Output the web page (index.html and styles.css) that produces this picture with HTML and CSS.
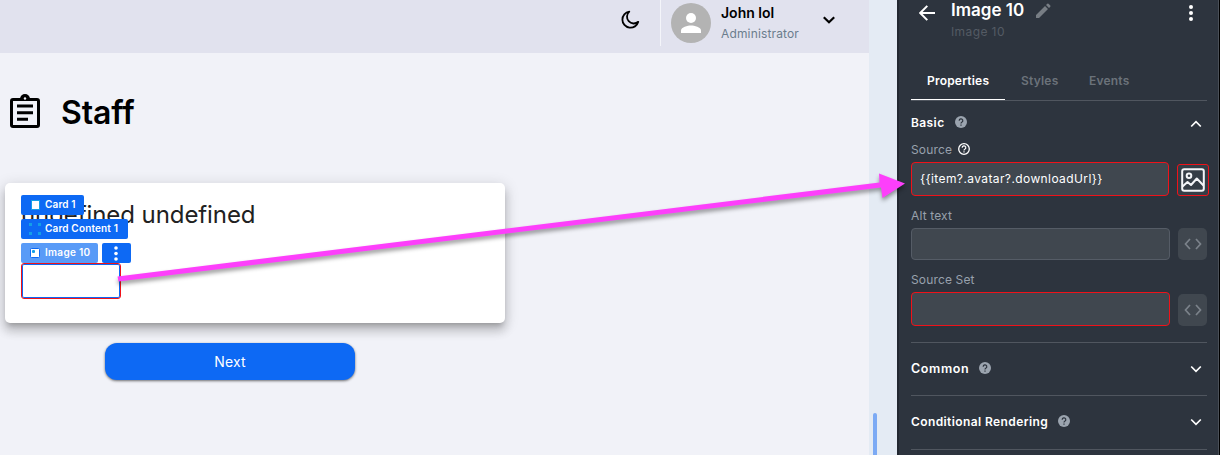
FILE: index.html
```html
<!DOCTYPE html>
<html lang="en">
<head>
<meta charset="utf-8">
<title>Staff</title>
<link rel="stylesheet" href="styles.css">
</head>
<body>
<div class="app">
  <main class="canvas">
    <header class="topbar">
      <svg class="moon" width="20" height="20" viewBox="0 0 20 20"><path d="M9.300 1.600A8.100 8.100 0 1 0 18.300 11.800A6.600 6.600 0 0 1 9.300 1.600Z" fill="none" stroke="#000" stroke-width="1.800" stroke-linejoin="round"/></svg>
      <div class="user">
        <svg width="40" height="40" viewBox="0 0 40 40"><circle cx="20" cy="20" r="20" fill="#b3b3b3"/><circle cx="20" cy="15" r="5" fill="#fff"/><path d="M10 30v-2.500c0-3.300 6.700-5 10-5s10 1.700 10 5V30Z" fill="#fff"/></svg>
        <div class="who"><span class="name">John lol</span><span class="role">Administrator</span></div>
        <svg class="caret" width="14" height="8" viewBox="0 0 14 8"><path d="M1.800 1.300 7 6.300l5.200-5" fill="none" stroke="#000" stroke-width="2.200"/></svg>
      </div>
    </header>
    <div class="title">
      <svg width="32" height="35" viewBox="0 0 32 35"><rect x="2.500" y="5.500" width="27" height="27" rx="1.500" fill="none" stroke="#000" stroke-width="3"/><path d="M11 5a5 5 0 0 1 10 0Z" fill="#000"/><circle cx="16" cy="4.500" r="1.200" fill="#f0f1f7"/><path d="M8 12h16M8 18.700h16M8 25.300h11" stroke="#000" stroke-width="3"/></svg>
      <h1>Staff</h1>
    </div>
    <section class="card">
      <p class="card-text">undefined undefined</p>
      <div class="chips">
        <span class="chip c1"><svg width="12" height="12" viewBox="0 0 12 12"><rect x="2.500" y="1.500" width="8" height="9" fill="#fff" stroke="#149fe8"/></svg><b>Card 1</b></span>
        <span class="chip c2"><svg width="12" height="12" viewBox="0 0 12 12"><path d="M0 0h3v3H0zM9 0h3v3H9zM0 9h3v3H0zM9 9h3v3H9z" fill="#149fe8"/></svg><b>Card Content 1</b></span>
        <div class="chip-row">
          <span class="chip c3"><svg width="12" height="12" viewBox="0 0 12 12"><rect x="1.500" y="1.500" width="9" height="9" rx="1" fill="#fff" stroke="#0d69f4"/><rect x="3" y="3" width="3" height="3" rx="1" fill="#149fe8"/></svg><b>Image 10</b></span>
          <span class="chip more"><svg width="4" height="15" viewBox="0 0 4 15"><g fill="#fff"><circle cx="2" cy="2" r="1.800"/><circle cx="2" cy="7.500" r="1.800"/><circle cx="2" cy="13" r="1.800"/></g></svg></span>
        </div>
        <div class="image-slot"></div>
      </div>
    </section>
    <button class="next">Next</button>
  </main>
  <div class="gutter"><div class="thumb"></div></div>
  <aside class="panel">
    <div class="head">
      <svg class="back" width="16" height="16" viewBox="0 0 16 16"><path d="M16 8H1.500M8.300.900 1.200 8l7.100 7.100" fill="none" stroke="#fff" stroke-width="2"/></svg>
      <div class="names">
        <div class="main-name"><span class="component">Image 10</span><svg width="16" height="16" viewBox="0 0 16 16"><path d="M1 15v-3L10 3l3 3-9 9ZM11 2l1.300-1.300a1 1 0 0 1 1.200 0l1.800 1.800a1 1 0 0 1 0 1.200L14 5Z" fill="#777d84"/></svg></div>
        <span class="sub-name">Image 10</span>
      </div>
      <svg class="kebab" width="4" height="16" viewBox="0 0 4 16"><g fill="#fff"><circle cx="2" cy="2" r="2"/><circle cx="2" cy="8" r="2"/><circle cx="2" cy="14" r="2"/></g></svg>
    </div>
    <nav class="tabs"><span class="tab active"><b>Properties</b></span><span class="tab styles"><b>Styles</b></span><span class="tab events"><b>Events</b></span></nav>
    <div class="section basic"><span class="t-basic">Basic</span>
      <svg class="help" width="12" height="12" viewBox="0 0 12 12"><circle cx="6" cy="6" r="6" fill="#9ba4af"/><path d="M4.200 4.700a1.800 1.800 0 1 1 2.600 1.500Q6 6.600 6 7.500M6 8.600v1.200" fill="none" stroke="#2d343e" stroke-width="1.200"/></svg>
      <svg class="chev" width="12" height="8" viewBox="0 0 12 8"><path d="m1.200 6.500 4.800-4.800 4.800 4.800" fill="none" stroke="#fff" stroke-width="1.700"/></svg>
    </div>
    <div class="label l1"><span class="t-source">Source</span><svg width="12" height="12" viewBox="0 0 12 12"><circle cx="6" cy="6" r="5.300" fill="none" stroke="#fff" stroke-width="1.300"/><path d="M4.200 4.700a1.800 1.800 0 1 1 2.600 1.500Q6 6.600 6 7.500M6 8.300v1.200" fill="none" stroke="#fff" stroke-width="1.200"/></svg></div>
    <div class="field f1"><div class="input red"><span>{{item?.avatar?.downloadUrl}}</span></div>
      <div class="pic"><svg width="24" height="24" viewBox="0 0 24 24"><g fill="none" stroke="#f3f5f8" stroke-width="2"><rect x="1.200" y="1.200" width="21.600" height="21.600" rx="2"/><circle cx="8" cy="7.800" r="2.300"/><path d="m1.500 18.500 5-4.500 3.500 3 5.800-6.500 6.700 7" stroke-linejoin="round"/></g></svg></div>
    </div>
    <div class="label l2"><span class="t-alt">Alt text</span></div>
    <div class="field f2"><div class="input"></div><div class="code"><svg width="18" height="12" viewBox="0 0 18 12"><path d="M6 1 1.500 6 6 11M12 1l4.500 5-4.500 5" fill="none" stroke="#7b828a" stroke-width="1.700"/></svg></div></div>
    <div class="label l3"><span class="t-set">Source Set</span></div>
    <div class="field f3"><div class="input red"></div><div class="code"><svg width="18" height="12" viewBox="0 0 18 12"><path d="M6 1 1.500 6 6 11M12 1l4.500 5-4.500 5" fill="none" stroke="#7b828a" stroke-width="1.700"/></svg></div></div>
    <div class="section common"><span class="t-common">Common</span>
      <svg class="help" width="12" height="12" viewBox="0 0 12 12"><circle cx="6" cy="6" r="6" fill="#9ba4af"/><path d="M4.200 4.700a1.800 1.800 0 1 1 2.600 1.500Q6 6.600 6 7.500M6 8.600v1.200" fill="none" stroke="#2d343e" stroke-width="1.200"/></svg>
      <svg class="chev" width="12" height="8" viewBox="0 0 12 8"><path d="m1.200 1.500 4.800 4.800 4.800-4.800" fill="none" stroke="#fff" stroke-width="1.700"/></svg></div>
    <div class="section cond"><span class="t-cond">Conditional Rendering</span>
      <svg class="help" width="12" height="12" viewBox="0 0 12 12"><circle cx="6" cy="6" r="6" fill="#9ba4af"/><path d="M4.200 4.700a1.800 1.800 0 1 1 2.600 1.500Q6 6.600 6 7.500M6 8.600v1.200" fill="none" stroke="#2d343e" stroke-width="1.200"/></svg>
      <svg class="chev" width="12" height="8" viewBox="0 0 12 8"><path d="m1.200 1.500 4.800 4.800 4.800-4.800" fill="none" stroke="#fff" stroke-width="1.700"/></svg></div>
    <div class="section last"></div>
  </aside>
  <svg class="arrow" width="1220" height="455" viewBox="0 0 1220 455"><path d="M117.500 276.500 879.500 182.500 879 173.500 905 183.500 882.500 198 881 187.500 118.500 281.500Z" fill="#fd3ffb"/></svg>
</div>
</body>
</html>
```
FILE: styles.css
```css
* { box-sizing: border-box; }
body { margin: 0; font-family: Inter, "Liberation Sans", sans-serif; }
svg { display: block; flex: none; }
b { font-weight: inherit; }
span { white-space: nowrap; }
.app { position: relative; display: flex; width: 1220px; height: 455px; overflow: hidden; }

.canvas { width: 869px; background: #f1f2f8; }
.topbar { display: flex; justify-content: flex-end; height: 53px; background: #e1e2ee; }
.moon { margin: 10px 20px 0 0; }
.user { display: flex; width: 209px; height: 46px; padding: 3px 0 0 10px; border-left: 1px solid #f4f5fa; }
.who { display: flex; flex-direction: column; width: 102px; padding-left: 10px; }
.name { height: 20px; font-size: 14px; line-height: 20px; font-weight: 600; }
.role { height: 20px; font-size: 12px; line-height: 22px; color: #6b7d8d; letter-spacing: .15px; }
.caret { margin: 13px 0 0 9px; }
.title { display: flex; gap: 20px; height: 130px; padding: 41px 0 0 9px; }
h1 { margin: 0; font-size: 32px; line-height: 38px; font-weight: 600; letter-spacing: -.1px; }
.card { position: relative; width: 500px; height: 140px; margin-left: 5px; padding: 16px; border-radius: 5px; background: #fff; box-shadow: 0 5px 5px -3px rgba(0,0,0,.2), 0 8px 10px 1px rgba(0,0,0,.14), 0 3px 14px 2px rgba(0,0,0,.12); }
.card-text { margin: 0; font-size: 24px; line-height: 32px; color: #212121; letter-spacing: -.08px; }
.chips { position: absolute; left: 16px; top: 12px; display: flex; flex-direction: column; align-items: flex-start; }
.chip { display: flex; align-items: center; gap: 4px; height: 20px; padding-left: 8px; border-radius: 2px; background: #0d69f4; color: #fff; font-size: 10px; font-weight: 600; }
.chip b { padding-bottom: 2px; letter-spacing: .15px; }
.c1 { width: 63px; margin-bottom: 4px; }
.c2 { width: 107px; margin-bottom: 4px; }
.c3 { width: 77px; background: #599bf7; }
.c3 b { letter-spacing: .3px; }
.chip-row { display: flex; gap: 4px; }
.more { width: 29px; padding: 0 0 0 12px; }
.image-slot { width: 100px; height: 36px; border: 1px solid #f01219; border-radius: 3px; box-shadow: inset 0 0 0 1px #0d69f4; background: #fff; }
.next { display: block; width: 250px; height: 37px; margin: 20px 0 0 105px; padding: 0; border: 0; border-radius: 12px; background: #0d69f4; color: #fff; font: 14px/36px Inter, sans-serif; letter-spacing: .2px; box-shadow: 0 1px 3px rgba(0,0,0,.4), 0 1px 2px rgba(0,0,0,.2); }

.gutter { width: 28px; padding: 413px 0 0 4px; background: #e4ebf4; }
.thumb { width: 4px; height: 42px; border-radius: 2px 2px 0 0; background: #7caaf4; }

.panel { width: 323px; padding: 0 12px; border-left: 2px solid #222831; border-right: 1px solid #000; background: #2d343e; color: #fff; box-shadow: inset -1px 0 #4a5058; }
.head { display: flex; height: 60px; }
.back { margin: 5px 0 0 8px; }
.names { width: 238px; padding-left: 16px; }
.main-name { display: flex; gap: 10px; height: 22px; }
.main-name svg { margin-top: 3px; }
.component { width: 74px; font-size: 17px; line-height: 21px; font-weight: 600; }
.sub-name { display: block; font-size: 12px; line-height: 20px; color: #545b64; letter-spacing: .4px; }
.kebab { margin: 5px 0 0 16px; }
.tabs { display: flex; height: 41px; border-bottom: 1px solid #50565f; font-size: 12px; line-height: 42px; font-weight: 600; color: #6b727a; letter-spacing: .2px; }
.tab { height: 40px; }
.tab.active { width: 94px; padding-left: 16px; color: #fff; border-bottom: 1px solid #fff; }
.tab.styles { width: 84px; padding-left: 16px; }
.section { display: flex; align-items: center; font-size: 12px; font-weight: 600; }
.help { margin-left: 10px; }
.chev { margin: 2px 5px 0 auto; }
.t-basic { letter-spacing: .4px; }
.t-common { font-size: 12.5px; letter-spacing: .6px; }
.t-cond { letter-spacing: .4px; }
.basic { height: 43px; }
.basic .help { margin-bottom: 2px; }
.label { display: flex; align-items: center; gap: 6px; height: 20px; font-size: 12px; color: #98a1ad; letter-spacing: .15px; }
.l1 { margin-top: -5px; }
.l2 { margin-top: 9px; }
.l3 { margin-top: 9px; }
.field { display: flex; gap: 8px; margin-top: 3px; }
.f1 { height: 34px; align-items: flex-end; }
.f2 { height: 32px; }
.f3 { height: 34px; align-items: flex-end; }
.input { display: flex; flex: none; align-items: center; width: 259px; height: 100%; padding: 0 0 2px 8px; border: 1px solid #555c66; border-radius: 4px; background: #40474f; font-size: 12px; letter-spacing: .4px; color: #fff; }
.input.red { border-color: #f01219; }
.f1 .input { width: 258px; }
.pic { display: flex; flex: none; align-items: center; justify-content: center; width: 32px; height: 32px; border: 1px solid #f01219; border-radius: 3px; background: #343d46; }
.code { display: flex; flex: none; align-items: center; justify-content: center; width: 29px; height: 32px; border-radius: 5px; background: #40474f; }
.common { height: 53px; margin-top: 16px; padding-bottom: 2px; border-top: 1px solid #50565f; }
.cond { height: 54px; padding-bottom: 3px; border-top: 1px solid #50565f; }
.last { height: 6px; border-top: 1px solid #50565f; }
.arrow { position: absolute; left: 0; top: 0; filter: drop-shadow(0 3px 2px rgba(0,0,0,.4)); }
```
